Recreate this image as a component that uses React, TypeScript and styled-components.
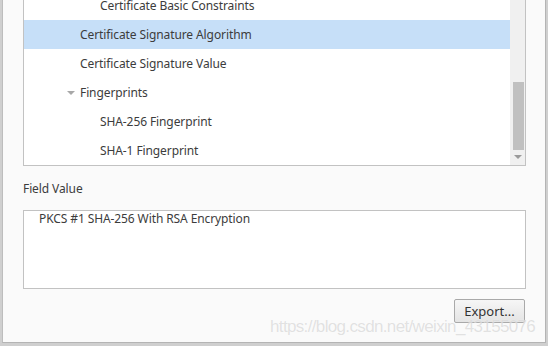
import React, { FunctionComponent } from "react";
import styled, { createGlobalStyle } from "styled-components";

/* Styles */
const GlobalStyle = createGlobalStyle`
  html, body {
    margin: 0;
    padding: 0;
    background: #cfcfcf;
  }
  body {
    font-family: "Noto Sans", "DejaVu Sans", sans-serif;
    font-size: 12px;
    letter-spacing: -0.1px;
    color: #3c3c3c;
  }
`;

const Window = styled.div`
  position: relative;
  box-sizing: border-box;
  width: 544px;
  height: 343px;
  margin-left: 2px;
  background: #fafafa;
  border-left: 1px solid #bdbdbd;
  border-right: 1px solid #b4b4b4;
  border-bottom: 1px solid #b4b4b4;
  padding: 0 19px 0 20px;
  display: flex;
  flex-direction: column;
  overflow: hidden;
`;

const TreeBox = styled.div`
  display: flex;
  height: 166px;
  box-sizing: border-box;
  border: 1px solid #c2c2c2;
  border-top: none;
  background: #fff;
`;

const Rows = styled.div`
  flex: 1;
  overflow: hidden;
`;

const RowList = styled.div<{ $offset: number }>`
  margin-top: ${(p) => -p.$offset}px;
`;

const Row = styled.div<{ $level: number; $selected?: boolean }>`
  height: 29px;
  display: flex;
  align-items: center;
  padding-left: ${(p) => (p.$level === 2 ? 76 : 56)}px;
  background: ${(p) => (p.$selected ? "#c6dff8" : "transparent")};
  white-space: nowrap;
`;

const Expander = styled.span`
  width: 0;
  height: 0;
  margin-left: -13px;
  margin-right: 5px;
  border-left: 4px solid transparent;
  border-right: 4px solid transparent;
  border-top: 4px solid #a8a8a8;
`;

const ScrollTrack = styled.div`
  width: 15px;
  background: #f0f0f0;
  display: flex;
  flex-direction: column;
  align-items: center;
`;

const Thumb = styled.div`
  width: 11px;
  height: 68px;
  margin-top: 82px;
  margin-left: 1px;
  background: #c0c0c0;
`;

const DownArrow = styled.div`
  margin-top: 5px;
  width: 0;
  height: 0;
  border-left: 4px solid transparent;
  border-right: 4px solid transparent;
  border-top: 4px solid #9a9a9a;
`;

const FieldLabel = styled.div`
  height: 44px;
  display: flex;
  align-items: center;
`;

const ValueBox = styled.div`
  height: 79px;
  box-sizing: border-box;
  border: 1px solid #c2c2c2;
  background: #fff;
  padding: 0 15px;
  line-height: 15px;
`;

const Footer = styled.div`
  display: flex;
  justify-content: flex-end;
  margin-top: 10px;
  padding-right: 1px;
`;

const Button = styled.button`
  width: 71px;
  height: 24px;
  box-sizing: border-box;
  border: 1px solid #a9a9a9;
  border-radius: 2px;
  background: linear-gradient(#f6f6f6, #e4e4e4);
  font-family: inherit;
  font-size: 13px;
  color: #333;
  padding: 0;
`;

const Watermark = styled.div`
  position: absolute;
  left: 267px;
  top: 317px;
  font-family: "Liberation Sans", Arial, sans-serif;
  font-size: 17px;
  letter-spacing: -0.65px;
  color: rgba(190, 190, 190, 0.45);
  text-shadow: 0 0 1px rgba(255, 255, 255, 0.8);
  white-space: nowrap;
  pointer-events: none;
`;

/* Data */
const rows = [
  { label: "Certificate Basic Constraints", level: 2 },
  { label: "Certificate Signature Algorithm", level: 1, selected: true },
  { label: "Certificate Signature Value", level: 1 },
  { label: "Fingerprints", level: 1, expander: true },
  { label: "SHA-256 Fingerprint", level: 2 },
  { label: "SHA-1 Fingerprint", level: 2 },
];

const App: FunctionComponent = () => {
  return (
    <>
      <GlobalStyle />
      <Window>
        <TreeBox>
          <Rows>
            <RowList $offset={9}>
              {rows.map((r) => (
                <Row key={r.label} $level={r.level} $selected={r.selected}>
                  {r.expander && <Expander />}
                  {r.label}
                </Row>
              ))}
            </RowList>
          </Rows>
          <ScrollTrack>
            <Thumb />
            <DownArrow />
          </ScrollTrack>
        </TreeBox>
        <FieldLabel>Field Value</FieldLabel>
        <ValueBox>PKCS #1 SHA-256 With RSA Encryption</ValueBox>
        <Footer>
          <Button>Export...</Button>
        </Footer>
        <Watermark>https://blog.csdn.net/weixin_43155076</Watermark>
      </Window>
    </>
  );
};

export default App;
